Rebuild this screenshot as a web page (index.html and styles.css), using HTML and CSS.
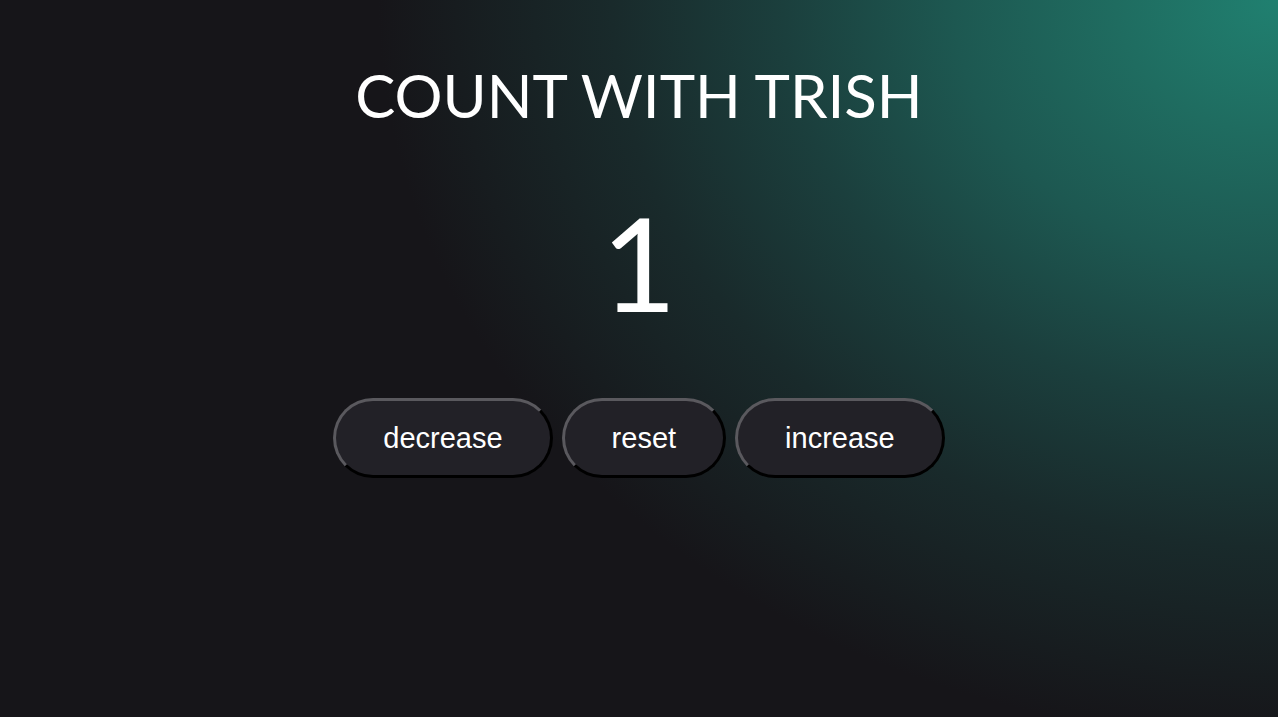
FILE: index.html
```html
<!DOCTYPE html>
<html lang="en">
<head>
<meta charset="utf-8">
<title>Count with Trish</title>
<link rel="stylesheet" href="styles.css">
</head>
<body>
<main class="counter">
  <h1 class="title">COUNT WITH TRISH</h1>
  <div class="value">1</div>
  <div class="buttons">
    <button class="btn">decrease</button>
    <button class="btn">reset</button>
    <button class="btn">increase</button>
  </div>
</main>
</body>
</html>
```
FILE: styles.css
```css
html, body {
  margin: 0;
  height: 100%;
}
body {
  background-color: #161519;
  background-image: radial-gradient(ellipse 900px 740px at 100% 0%, #208070 0%, #1f6c60 18%, #1d5851 36%, #1b3f3d 55%, #192a2b 74%, #161519 100%);
  color: #fff;
  font-family: Lato, "Noto Sans", sans-serif;
}
.counter {
  display: flex;
  flex-direction: column;
  align-items: center;
  padding-top: 57px;
}
.title {
  margin: 0;
  font-weight: 400;
  font-size: 60px;
  line-height: 76px;
}
.value {
  margin-top: 54px;
  font-size: 130px;
  line-height: 150px;
}
.buttons {
  display: flex;
  gap: 9px;
  margin-top: 61px;
}
.btn {
  height: 80px;
  padding: 0 47px;
  border: 3px solid;
  border-color: #5a595e #000 #000 #5a595e;
  border-radius: 40px;
  background: #222127;
  color: #fff;
  font-family: "Liberation Sans", Arial, sans-serif;
  font-size: 29px;
}
```
